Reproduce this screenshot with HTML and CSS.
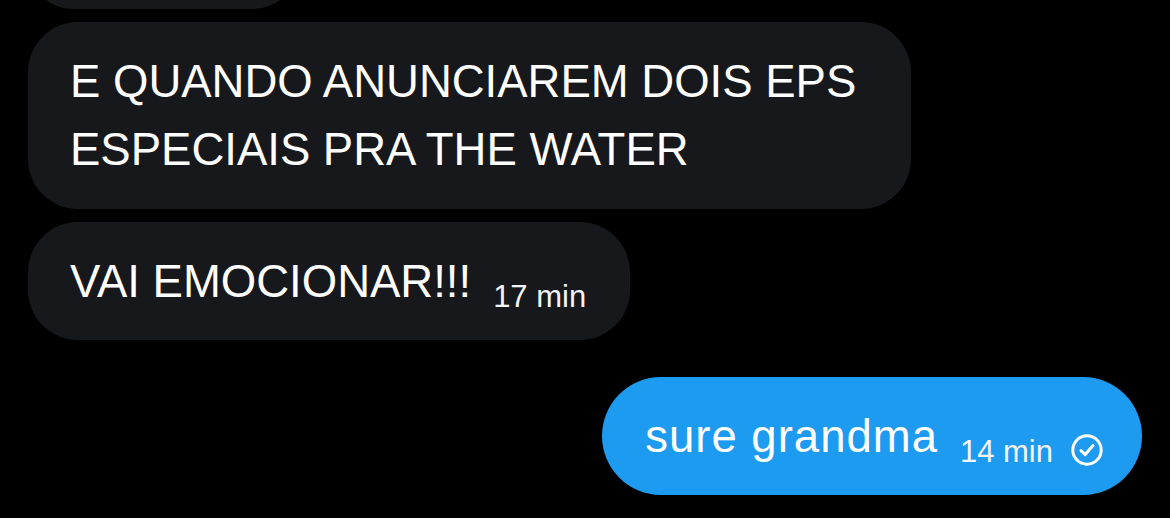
FILE: index.html
```html
<!DOCTYPE html>
<html lang="pt">
<head>
    <meta charset="UTF-8">
    <meta name="viewport" content="width=device-width, initial-scale=1.0">
    <title>Mensagens</title>
    <link rel="stylesheet" href="styles.css">
</head>
<body>
    <div class="chat">
        <!-- mensagem anterior, cortada no topo -->
        <div class="msg msg_in msg_cut"></div>

        <div class="msg msg_in msg_wide">
            E QUANDO ANUNCIAREM DOIS EPS ESPECIAIS PRA THE WATER
        </div>
        <div class="msg msg_in">
            <span class="txt">VAI EMOCIONAR!!!</span><span class="time">17 min</span>
        </div>

        <div class="msg msg_out">
            <span class="txt txt_low">sure grandma</span><span class="time">14 min</span><svg class="seen" viewBox="0 0 32 32" width="32" height="32">
                <circle cx="16" cy="16" r="14.2" fill="none" stroke="#fff" stroke-width="3"/>
                <path d="M10 16.6 L14.2 20.6 L22 11.6" fill="none" stroke="#fff" stroke-width="3" stroke-linecap="round" stroke-linejoin="round"/>
            </svg>
        </div>
    </div>
</body>
</html>
```

FILE: styles.css
```css
body
{
    margin: 0;
    background-color: #000;
    font-family: "Liberation Sans", Arial, sans-serif;
    color: #fff;
    overflow: hidden;
}
.chat
{
    display: flex;
    flex-direction: column;
    align-items: flex-start;
    gap: 13px;
    padding: 0 28px;
}
.msg
{
    box-sizing: border-box;
    padding: 26px 44px 24px 42px;
    border-radius: 50px;
    font-size: 45.5px;
    line-height: 68px;
}
.msg_in
{
    background-color: #16181c;
}
.msg_cut
{
    width: 270px;
    height: 118px;
    margin-top: -109px;
    border-radius: 45px;
}
.msg_wide
{
    max-width: 883px;
    padding-bottom: 25px;
}
.msg_out
{
    align-self: flex-end;
    margin-top: 24px;
    background-color: #1d9bf0;
    border-radius: 59px;
    padding-left: 43px;
    padding-right: 39px;
}
.txt_low
{
    letter-spacing: 1px;
}
.time
{
    display: inline-block;
    margin-left: 22px;
    font-size: 31px;
    line-height: 31px;
    vertical-align: -10px;
    color: #f2f4f5;
}
.seen
{
    display: inline-block;
    margin-left: 18px;
    vertical-align: -14px;
}
```
